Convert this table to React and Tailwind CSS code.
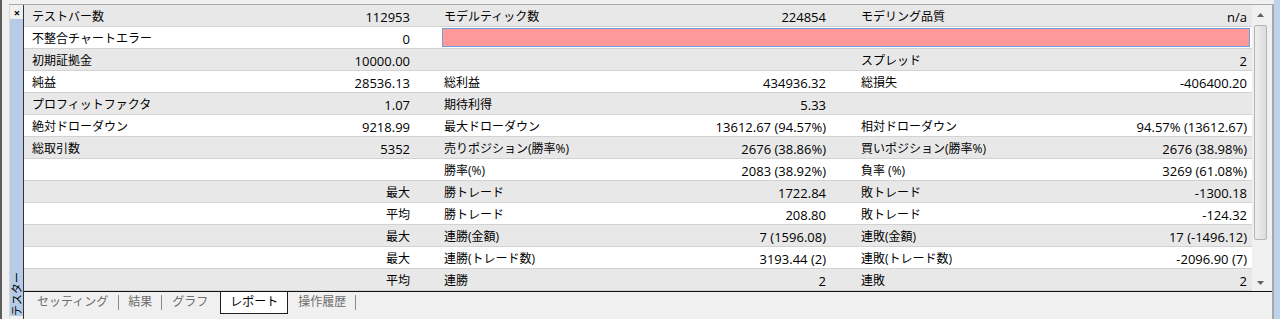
import React from 'react';

const jp = { fontFamily: '"Open Sans","Noto Sans CJK JP",sans-serif' };

// [label, value] per group; null = empty group
const rows = [
  [['テストバー数', '112953'], ['モデルティック数', '224854'], ['モデリング品質', 'n/a']],
  'pink',
  [['初期証拠金', '10000.00'], null, ['スプレッド', '2']],
  [['純益', '28536.13'], ['総利益', '434936.32'], ['総損失', '-406400.20']],
  [['プロフィットファクタ', '1.07'], ['期待利得', '5.33'], null],
  [['絶対ドローダウン', '9218.99'], ['最大ドローダウン', '13612.67 (94.57%)'], ['相対ドローダウン', '94.57% (13612.67)']],
  [['総取引数', '5352'], ['売りポジション(勝率%)', '2676 (38.86%)'], ['買いポジション(勝率%)', '2676 (38.98%)']],
  [null, ['勝率(%)', '2083 (38.92%)'], ['負率 (%)', '3269 (61.08%)']],
  [['', '最大'], ['勝トレード', '1722.84'], ['敗トレード', '-1300.18']],
  [['', '平均'], ['勝トレード', '208.80'], ['敗トレード', '-124.32']],
  [['', '最大'], ['連勝(金額)', '7 (1596.08)'], ['連敗(金額)', '17 (-1496.12)']],
  [['', '最大'], ['連勝(トレード数)', '3193.44 (2)'], ['連敗(トレード数)', '-2096.90 (7)']],
  [['', '平均'], ['連勝', '2'], ['連敗', '2']],
];

const groupCls = [
  'w-[416px] pl-[8px] pr-[30px]',
  'w-[417px] pl-[4px] pr-[31px]',
  'w-[395px] pl-[4px] pr-[5px]',
];

function Cell({ data, idx }) {
  if (!data) return <div className={`${groupCls[idx]} h-full`} />;
  const [label, value] = data;
  const cjkValue = /[^\x00-\x7f]/.test(value);
  return (
    <div className={`${groupCls[idx]} h-full pt-[3px] flex items-center justify-between`}>
      <span className="text-[12px] leading-[18px] whitespace-nowrap">{label}</span>
      <span className={`${cjkValue ? 'text-[12px]' : 'text-[13px]'} leading-[18px] whitespace-nowrap`}>{value}</span>
    </div>
  );
}

function Row({ row, i }) {
  const bg = i % 2 === 0 ? 'bg-[#e8e8e8]' : 'bg-white';
  if (row === 'pink') {
    return (
      <div className={`h-[22px] flex border-b border-[#d2d2d2] ${bg}`}>
        <Cell data={['不整合チャートエラー', '0']} idx={0} />
        <div className="flex-1 px-[2px] py-[1px]">
          <div className="h-full bg-[#ff9999] border border-[#6fa0da]" />
        </div>
      </div>
    );
  }
  return (
    <div className={`h-[22px] flex border-b border-[#d2d2d2] ${bg}`}>
      {row.map((c, k) => (
        <Cell key={k} data={c} idx={k} />
      ))}
    </div>
  );
}

function Scrollbar() {
  return (
    <div className="w-[17px] flex flex-col bg-[#f0f0f0]">
      <div className="h-[20px] flex items-center justify-center">
        <svg width="7" height="4" viewBox="0 0 7 4"><path d="M0 4 L3.5 0 L7 4 Z" fill="#606060" /></svg>
      </div>
      <div className="flex-1 px-[2px] pb-[34px]">
        <div className="h-full rounded-[2px] border border-[#b4b4b4] bg-gradient-to-r from-[#eeeeee] to-[#dcdcdc]" />
      </div>
      <div className="h-[17px] flex items-center justify-center">
        <svg width="7" height="4" viewBox="0 0 7 4"><path d="M0 0 L7 0 L3.5 4 Z" fill="#606060" /></svg>
      </div>
    </div>
  );
}

function Tabs() {
  const sep = <div className="w-px h-[15px] bg-[#8c8c8c]" />;
  return (
    <div className="h-[22px] flex items-start text-[12px] text-[#6d6d6d]">
      <span className="ml-[13px] leading-[20px]">セッティング</span>
      <div className="ml-[10px] mt-[3px]">{sep}</div>
      <span className="ml-[9px] leading-[20px]">結果</span>
      <div className="ml-[9px] mt-[3px]">{sep}</div>
      <span className="ml-[10px] leading-[20px]">グラフ</span>
      <div className="ml-[12px] w-[68px] h-[22px] bg-white border-x border-b border-[#1e1e1e] flex justify-center text-black leading-[20px]">
        レポート
      </div>
      <span className="ml-[10px] leading-[20px]">操作履歴</span>
      <div className="ml-[9px] mt-[3px]">{sep}</div>
    </div>
  );
}

export default function App() {
  return (
    <div className="w-[1280px] h-[319px] bg-[#f0f0f0] flex overflow-hidden text-black" style={jp}>
      <div className="w-[2px] h-full bg-[#5c5c5c]" />
      <div className="w-[7px] h-full" />
      <div className="flex-1 flex mt-[4px] border-t border-[#a8a8a8] border-r-2 border-r-[#a8a8a8]">
        {/* side strip */}
        <div className="w-[14px] flex flex-col border-l border-[#d8d8d8]">
          <div className="h-[14px] pl-[1px] flex items-center justify-center text-[11px] font-bold leading-none">×</div>
          <div className="flex-1 mb-[3px] bg-[#b6cce6] flex flex-col justify-end items-center overflow-hidden">
            <span className="text-[11px] leading-[13px] rotate-180 [writing-mode:vertical-rl] [text-orientation:sideways]">
              テスター
            </span>
          </div>
        </div>
        {/* main */}
        <div className="flex-1 flex flex-col border-l border-[#333333]">
          <div className="flex">
            <div className="w-[1228px] flex flex-col">
              {rows.map((r, i) => (
                <Row key={i} row={r} i={i} />
              ))}
            </div>
            <Scrollbar />
          </div>
          <div className="h-px bg-[#111111]" />
          <Tabs />
        </div>
      </div>
      <div className="w-[6px] h-full bg-[#bdd3eb]" />
    </div>
  );
}
